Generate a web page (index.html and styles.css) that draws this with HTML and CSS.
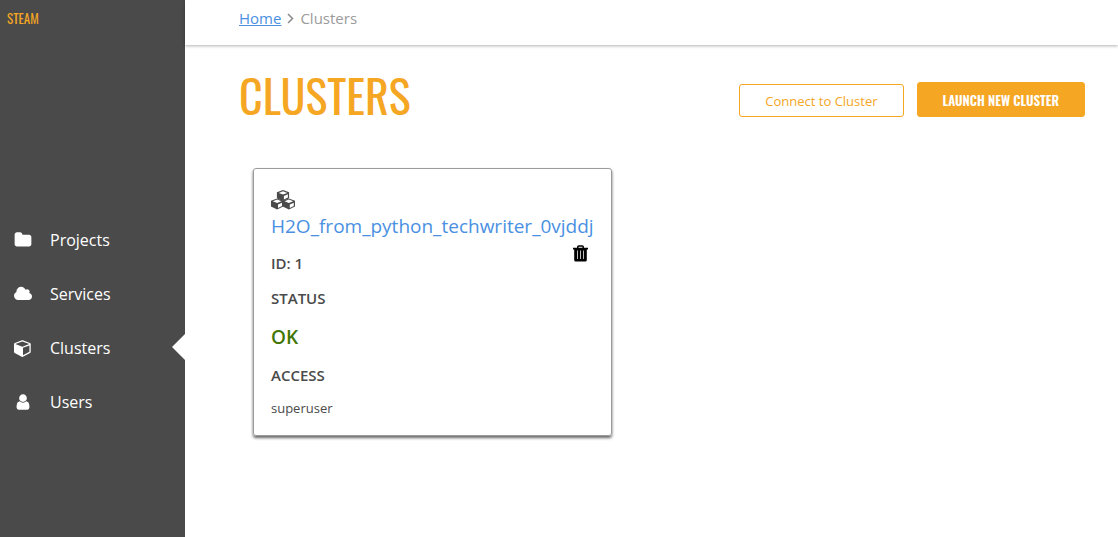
FILE: index.html
```html
<!DOCTYPE html>
<html lang="en">
<head>
<meta charset="utf-8">
<title>Steam - Clusters</title>
<link rel="stylesheet" href="styles.css">
</head>
<body>
<div class="app">
  <aside class="sidebar">
    <a class="brand" href="#">STEAM</a>
    <nav class="nav">
      <a class="nav-item" href="#"><svg class="nav-icon" viewBox="0 0 1792 1792"><path d="M1728 608v704q0 92-66 158t-158 66h-1216q-92 0-158-66t-66-158v-960q0-92 66-158t158-66h320q92 0 158 66t66 158v32h672q92 0 158 66t66 158z"/></svg>Projects</a>
      <a class="nav-item" href="#"><svg class="nav-icon" viewBox="64 0 1920 1792"><path d="M1984 1152q0 159-112.5 271.5t-271.5 112.5h-1088q-185 0-316.5-131.5t-131.5-316.5q0-132 71-241.5t187-163.5q-2-28-2-43 0-212 150-362t362-150q158 0 286.5 88t187.5 230q70-62 166-62 106 0 181 75t75 181q0 75-41 138 129 30 213 134.5t84 239.5z"/></svg>Services</a>
      <a class="nav-item active" href="#" aria-current="page"><svg class="nav-icon" viewBox="0 0 1792 1792"><path d="M896 1629l640-349v-636l-640 233v752zm-64-865l698-254-698-254-698 254 698 254zm832-252v768q0 35-18 65t-49 47l-704 384q-28 16-61 16t-61-16l-704-384q-31-17-49-47t-18-65v-768q0-40 23-73t61-50l704-256q22-8 44-8t44 8l704 256q38 17 61 50t23 73z"/></svg>Clusters</a>
      <a class="nav-item" href="#"><svg class="nav-icon" viewBox="0 0 1792 1792"><path d="M1536 1399q0 109-62.5 187t-150.5 78h-854q-88 0-150.5-78t-62.5-187q0-85 8.5-160.5t31.5-152 58.5-131 94-89 134.5-34.5q131 128 313 128t313-128q76 0 134.5 34.5t94 89 58.5 131 31.5 152 8.5 160.5zm-256-887q0 159-112.5 271.5t-271.5 112.5-271.5-112.5-112.5-271.5 112.5-271.5 271.5-112.5 271.5 112.5 112.5 271.5z"/></svg>Users</a>
    </nav>
  </aside>
  <div class="content">
    <header class="topbar">
      <a class="crumb-link" href="#">Home</a>
      <svg class="crumb-arrow" viewBox="0 0 7 11"><path d="M1 1l4.5 4.5L1 10"/></svg>
      <span>Clusters</span>
    </header>
    <main class="page">
      <div class="page-head">
        <h1 class="page-title">CLUSTERS</h1>
        <div class="actions">
          <button class="button outline" type="button">Connect to Cluster</button>
          <button class="button solid" type="button">LAUNCH NEW CLUSTER</button>
        </div>
      </div>
      <section class="card">
        <svg class="cubes" viewBox="0 0 24 20">
          <defs>
            <g id="cube">
              <path class="cube-body" d="M6.1 0L12.2 2.3V8.2L6.1 11.2L0 8.2V2.3z"/>
              <path class="cube-face" d="M6.1 1.2L10.4 2.9L6.1 4.6L1.8 2.9zM7 6L11 4.3V7.5L7 9.5z"/>
            </g>
          </defs>
          <use href="#cube" x="5.9" y="0"/>
          <use href="#cube" x="0" y="8.4"/>
          <use href="#cube" x="11.8" y="8.4"/>
        </svg>
        <a class="card-title" href="#">H2O_from_python_techwriter_0vjddj</a>
        <div class="card-row">
          <h2 class="label">ID: 1</h2>
          <button class="delete" type="button" aria-label="Delete cluster">
            <svg class="trash" viewBox="0 0 15 17"><path class="trash-handle" d="M4.8 3V1.8Q4.8 .9 5.7 .9H9.3Q10.2 .9 10.2 1.8V3"/><path d="M0 2.7H15V4.5H13.8V15Q13.8 16.6 12.2 16.6H2.8Q1.2 16.6 1.2 15V4.5H0z"/><path class="trash-slots" d="M4.5 5.5V14M7.5 5.5V14M10.5 5.5V14"/></svg>
          </button>
        </div>
        <h2 class="label">STATUS</h2>
        <p class="status">OK</p>
        <h2 class="label">ACCESS</h2>
        <p class="access">superuser</p>
      </section>
    </main>
  </div>
</div>
</body>
</html>
```
FILE: styles.css
```css
* { box-sizing: border-box; }

body {
  margin: 0;
  background: #fff;
  color: #4a4a4a;
  font-family: "Open Sans", sans-serif;
  font-size: 16px;
}

h1, h2, p { margin: 0; }

button { cursor: pointer; }

.app {
  display: flex;
  min-height: 100vh;
}

.sidebar {
  flex: 0 0 185px;
  background: #4a4a4a;
}

.brand {
  display: block;
  height: 213px;
  padding: 9px 7px;
  color: #f5a623;
  font: 13px/18px Oswald, "Liberation Sans Narrow", sans-serif;
  text-decoration: none;
}

.nav-item {
  position: relative;
  display: flex;
  align-items: center;
  gap: 18px;
  height: 54px;
  padding-left: 14px;
  color: #fff;
  text-decoration: none;
}

.nav-icon {
  width: 18px;
  height: 18px;
  fill: #fff;
}

.active::after {
  content: "";
  position: absolute;
  right: 0;
  top: 13px;
  border: 13px solid transparent;
  border-left: 0;
  border-right-color: #fff;
}

.content {
  flex: 1;
  min-width: 0;
}

.topbar {
  display: flex;
  align-items: center;
  gap: 6px;
  height: 45px;
  padding: 0 54px 9px;
  box-shadow: 0 1px 3px rgba(0, 0, 0, 0.3);
  color: #9b9b9b;
  font-size: 15px;
}

.crumb-link { color: #4a90e2; }

.crumb-arrow {
  width: 7px;
  height: 11px;
  fill: none;
  stroke: #8a8a8a;
  stroke-width: 1.5;
}

.page { padding: 17px 33px 32px 54px; }

.page-head {
  display: flex;
  justify-content: space-between;
  align-items: flex-start;
}

.page-title {
  color: #f5a623;
  font: 400 46px/64px Oswald, "Liberation Sans Narrow", sans-serif;
}

.actions {
  display: flex;
  align-items: flex-end;
  gap: 13px;
  padding-top: 20px;
}

.button {
  padding: 0 25px;
  border: 1px solid #f5a623;
  border-radius: 3px;
  white-space: nowrap;
}

.outline {
  height: 33px;
  background: #fff;
  color: #f5a623;
  font: 400 13px "Open Sans", sans-serif;
}

.solid {
  height: 35px;
  background: #f5a623;
  color: #fff;
  font: 600 13px Oswald, "Liberation Sans Narrow", sans-serif;
}

.card {
  display: flex;
  flex-direction: column;
  width: fit-content;
  margin: 42px 0 0 14px;
  padding: 21px 17px 17px;
  border: 1px solid #9b9b9b;
  border-radius: 3px;
  box-shadow: 0 2px 3px rgba(0, 0, 0, 0.6);
}

.cubes {
  width: 24px;
  height: 20px;
}

.cube-body { fill: #4a4a4a; }

.cube-face { fill: #fff; }

.card-title {
  margin-top: 2px;
  color: #4a90e2;
  font-size: 19px;
  line-height: 28px;
  text-decoration: none;
}

.card-row {
  display: flex;
  justify-content: space-between;
  align-items: flex-end;
  height: 33px;
}

.label {
  font-size: 15px;
  font-weight: 600;
  line-height: 20px;
}

.card-row + .label { margin-top: 15px; }

.delete {
  align-self: flex-start;
  margin: 5px 6px 0 0;
  padding: 0;
  border: 0;
  background: none;
}

.trash {
  display: block;
  width: 15px;
  height: 17px;
}

.trash-handle {
  fill: none;
  stroke: #000;
  stroke-width: 1.5;
}

.trash-slots {
  stroke: #bbb;
  stroke-width: 1;
}

.status {
  margin: 15px 0 14px;
  color: #417505;
  font-size: 19px;
  font-weight: 600;
  line-height: 28px;
}

.access {
  margin-top: 14px;
  font-size: 13px;
  line-height: 19px;
}
```
